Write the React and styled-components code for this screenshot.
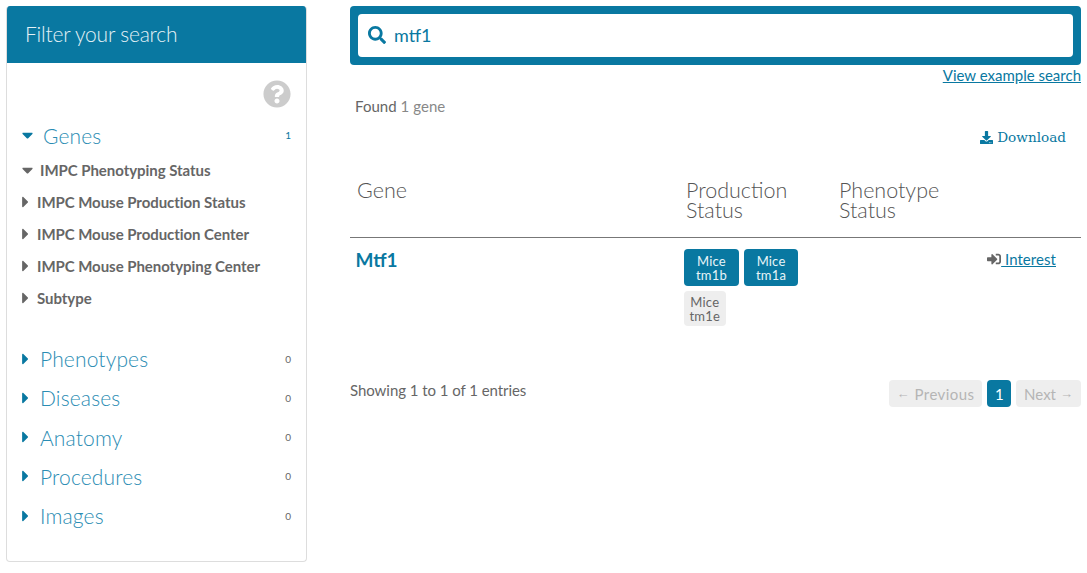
import React from "react";
import styled, { createGlobalStyle } from "styled-components";
import { FaQuestionCircle, FaSearch, FaDownload, FaSignInAlt, FaCaretRight, FaCaretDown } from "react-icons/fa";

const BLUE = "#0978a1";
const TEXT = "#666";

const GlobalStyle = createGlobalStyle`
  html, body { margin: 0; padding: 0; background: #fff; }
  body { font-family: "Lato", "Noto Sans", sans-serif; color: ${TEXT}; }
  * { box-sizing: border-box; }
`;

const Page = styled.div`
  display: flex;
  align-items: flex-start;
  width: 1087px;
  height: 573px;
  padding: 6px 6px 0;
  overflow: hidden;
`;

const Sidebar = styled.aside`
  width: 301px;
  height: 556px;
  flex: none;
  border: 1px solid #ddd;
  border-top: 0;
  border-radius: 4px;
  overflow: hidden;
`;

const SidebarHeader = styled.div`
  height: 57px;
  padding: 0 18px 2px;
  display: flex;
  align-items: center;
  background: ${BLUE};
  color: #e4f1f6;
  font-size: 21px;
  font-weight: 300;
  letter-spacing: -0.2px;
`;

const HelpRow = styled.div`
  display: flex;
  justify-content: flex-end;
  padding: 17px 15px 0;
  height: 59px;
  color: #ccc;
  font-size: 28px;
  line-height: 0;
`;

const Facet = styled.div`
  display: flex;
  align-items: center;
  height: ${(p) => p.$h || 39.25}px;
  padding: 0 15px ${(p) => (p.$h ? 2 : 0)}px;
  color: ${BLUE};
`;

const Caret = styled.span`
  display: inline-flex;
  flex: none;
  width: ${(p) => p.$w}px;
  color: ${(p) => p.$color || BLUE};
  svg {
    width: ${(p) => (p.$down ? 11 : 7)}px;
    height: 18px;
  }
`;

const FacetName = styled.span`
  flex: 1;
  font-size: 21px;
  font-weight: 300;
  letter-spacing: 0.15px;
  color: #2a8cb3;
`;

const Count = styled.span`
  font-size: 10px;
  color: ${(p) => p.$color || TEXT};
`;

const SubList = styled.div`
  margin: 4px 0 25px;
`;

const SubItem = styled.div`
  display: flex;
  align-items: center;
  height: 32px;
  padding-left: 15px;
  font-size: 15px;
  font-weight: 700;
  letter-spacing: -0.05px;
  color: ${TEXT};
`;

const Main = styled.main`
  width: 731px;
  margin-left: 43px;
  flex: none;
`;

const SearchBar = styled.div`
  height: 59px;
  padding: 8px;
  background: ${BLUE};
  border-radius: 4px;
`;

const SearchField = styled.div`
  height: 43px;
  display: flex;
  align-items: center;
  gap: 8px;
  padding: 0 0 2px 10px;
  background: #fff;
  border-radius: 4px;
  color: ${BLUE};
  font-size: 18px;
`;

const ExampleLink = styled.a`
  display: block;
  margin-top: 1px;
  text-align: right;
  font-size: 15px;
  line-height: 18px;
  color: ${BLUE};
  text-decoration: underline;
`;

const Found = styled.div`
  margin: 12px 0 0 5px;
  font-size: 15px;
  letter-spacing: 0.05px;
  line-height: 20px;
  color: #888;
  b { font-weight: 400; color: ${TEXT}; }
`;

const DownloadRow = styled.div`
  display: flex;
  justify-content: flex-end;
  align-items: center;
  gap: 4px;
  margin-top: 11px;
  padding-right: 15px;
  height: 20px;
  color: ${BLUE};
  font-family: "DejaVu Serif", serif;
  font-size: 13.6px;
`;

const Table = styled.div`
  display: grid;
  grid-template-columns: 329px 153px 1fr;
`;

const HeadRow = styled.div`
  grid-column: 1 / -1;
  display: grid;
  grid-template-columns: subgrid;
  height: 91px;
  padding-top: 33px;
  border-bottom: 1px solid #777;
`;

const HeadCell = styled.div`
  padding-left: 7px;
  font-size: 21.5px;
  font-weight: 300;
  line-height: 20px;
  color: #555;
`;

const GeneName = styled.a`
  padding: 10px 0 0 5.5px;
  font-size: 19px;
  font-weight: 700;
  color: ${BLUE};
`;

const Badges = styled.div`
  display: flex;
  flex-wrap: wrap;
  gap: 5px;
  align-content: flex-start;
  width: 130px;
  margin-left: 5px;
  padding-top: 11px;
`;

const Badge = styled.span`
  padding: ${(p) => (p.$off ? "3.5px 5.5px" : "4.5px 12px")};
  border-radius: 4px;
  text-align: center;
  font-size: 13px;
  letter-spacing: 0.2px;
  line-height: 14px;
  background: ${(p) => (p.$off ? "#eee" : BLUE)};
  color: ${(p) => (p.$off ? TEXT : "#e8f4f8")};
`;

const InterestCell = styled.div`
  display: flex;
  justify-content: flex-end;
  align-items: flex-start;
  padding: 12px 25px 0 0;
  font-size: 15px;
  letter-spacing: 0.05px;
  color: ${TEXT};
  a { color: ${BLUE}; text-decoration: underline; white-space: pre; }
  svg { margin-top: 2px; }
`;

const Footer = styled.div`
  display: flex;
  justify-content: space-between;
  align-items: flex-start;
  margin-top: 54px;
`;

const Showing = styled.div`
  font-size: 15px;
  letter-spacing: -0.05px;
  line-height: 20px;
  color: ${TEXT};
`;

const Pager = styled.div`
  display: flex;
  gap: 5px;
`;

const PageButton = styled.span`
  height: 27px;
  padding: 0 ${(p) => (p.$active ? 7.5 : 8)}px;
  display: flex;
  align-items: center;
  gap: ${(p) => p.$gap ?? 5}px;
  border-radius: 4px;
  font-size: 15px;
  letter-spacing: ${(p) => p.$spacing || 0}px;
  background: ${(p) => (p.$active ? BLUE : "#eee")};
  color: ${(p) => (p.$active ? "#fff" : "#b5b5b5")};
`;

const Arrow = styled.span`
  font-family: "Liberation Sans", sans-serif;
  font-size: 13px;
  letter-spacing: 0;
`;

const facets = ["Phenotypes", "Diseases", "Anatomy", "Procedures", "Images"];
const subs = ["IMPC Mouse Production Status", "IMPC Mouse Production Center", "IMPC Mouse Phenotyping Center", "Subtype"];

export default function App() {
  return (
    <Page>
      <GlobalStyle />
      <Sidebar>
        <SidebarHeader>Filter your search</SidebarHeader>
        <HelpRow><FaQuestionCircle /></HelpRow>
        <Facet $h={28}>
          <Caret $w={21} $down><FaCaretDown /></Caret>
          <FacetName>Genes</FacetName>
          <Count $color={BLUE}>1</Count>
        </Facet>
        <SubList>
          <SubItem>
            <Caret $w={18} $down $color={TEXT}><FaCaretDown /></Caret>
            IMPC Phenotyping Status
          </SubItem>
          {subs.map((s) => (
            <SubItem key={s}>
              <Caret $w={15} $color={TEXT}><FaCaretRight /></Caret>
              {s}
            </SubItem>
          ))}
        </SubList>
        {facets.map((f) => (
          <Facet key={f}>
            <Caret $w={18}><FaCaretRight /></Caret>
            <FacetName>{f}</FacetName>
            <Count>0</Count>
          </Facet>
        ))}
      </Sidebar>
      <Main>
        <SearchBar>
          <SearchField><FaSearch size={18} />mtf1</SearchField>
        </SearchBar>
        <ExampleLink>View example search</ExampleLink>
        <Found><b>Found</b> 1 gene</Found>
        <DownloadRow><FaDownload size={13} />Download</DownloadRow>
        <Table>
          <HeadRow>
            <HeadCell>Gene</HeadCell>
            <HeadCell>Production<br />Status</HeadCell>
            <HeadCell>Phenotype<br />Status</HeadCell>
          </HeadRow>
          <GeneName>Mtf1</GeneName>
          <Badges>
            <Badge>Mice<br />tm1b</Badge>
            <Badge>Mice<br />tm1a</Badge>
            <Badge $off>Mice<br />tm1e</Badge>
          </Badges>
          <InterestCell><FaSignInAlt size={14} /><a> Interest</a></InterestCell>
        </Table>
        <Footer>
          <Showing>Showing 1 to 1 of 1 entries</Showing>
          <Pager>
            <PageButton $spacing={0.42}><Arrow>←</Arrow>Previous</PageButton>
            <PageButton $active>1</PageButton>
            <PageButton $gap={4}>Next<Arrow>→</Arrow></PageButton>
          </Pager>
        </Footer>
      </Main>
    </Page>
  );
}
